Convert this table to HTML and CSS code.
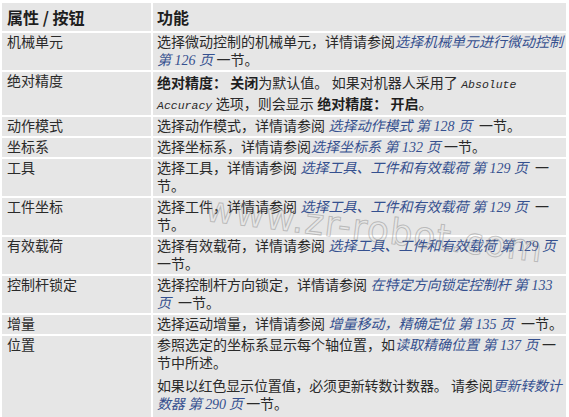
FILE: index.html
```html
<!DOCTYPE html>
<html lang="zh-CN">
<head>
<meta charset="utf-8">
<title>属性 / 按钮</title>
<link rel="stylesheet" href="styles.css">
</head>
<body>
<div class="page">
  <div class="grid">
    <div class="cell head">属性 / 按钮</div>
    <div class="cell head desc">功能</div>

    <div class="cell">机械单元</div>
    <div class="cell desc">选择微动控制的机械单元，详情请参阅<a class="ref">选择机械单元进行微动控制 第 126 页</a> 一节。</div>

    <div class="cell">绝对精度</div>
    <div class="cell desc"><b>绝对精度： 关闭</b>为默认值。 如果对机器人采用了 <span class="mono">Absolute Accuracy</span> 选项，则会显示 <b>绝对精度： 开启</b>。</div>

    <div class="cell">动作模式</div>
    <div class="cell desc">选择动作模式，详情请参阅 <a class="ref">选择动作模式 第 128 页</a>&nbsp; 一节。</div>

    <div class="cell">坐标系</div>
    <div class="cell desc">选择坐标系，详情请参阅<a class="ref">选择坐标系 第 132 页</a> 一节。</div>

    <div class="cell">工具</div>
    <div class="cell desc">选择工具，详情请参阅 <a class="ref">选择工具、工件和有效载荷 第 129 页</a>&nbsp; 一节。</div>

    <div class="cell">工件坐标</div>
    <div class="cell desc">选择工件，详情请参阅 <a class="ref">选择工具、工件和有效载荷 第 129 页</a>&nbsp; 一节。</div>

    <div class="cell">有效载荷</div>
    <div class="cell desc">选择有效载荷，详情请参阅 <a class="ref">选择工具、工件和有效载荷 第 129 页</a> 一节。</div>

    <div class="cell">控制杆锁定</div>
    <div class="cell desc">选择控制杆方向锁定，详情请参阅 <a class="ref">在特定方向锁定控制杆 第 133 页</a>&nbsp; 一节。</div>

    <div class="cell">增量</div>
    <div class="cell desc">选择运动增量，详情请参阅 <a class="ref">增量移动，精确定位 第 135 页</a>&nbsp; 一节。</div>

    <div class="cell">位置</div>
    <div class="cell desc">
      <p>参照选定的坐标系显示每个轴位置，如<a class="ref">读取精确位置 第 137 页</a> 一节中所述。</p>
      <p class="tight">如果以红色显示位置值，必须更新转数计数器。 请参阅<a class="ref">更新转数计数器 第 290 页</a> 一节。</p>
    </div>
  </div>
  <div class="watermark">www.zr-robot.com</div>
</div>
</body>
</html>
```

FILE: styles.css
```css
html, body {
  margin: 0;
  padding: 0;
  background: #ffffff;
}

.page {
  position: relative;
  width: 569px;
  height: 417px;
  overflow: hidden;
}

.grid {
  display: grid;
  grid-template-columns: 149px 413px;
  gap: 2px;
  padding: 3px 0 0 2px;
  font-family: "Liberation Serif", "Noto Sans CJK SC", serif;
  font-size: 14px;
  line-height: 18px;
  color: #2a2a2a;
}

.cell {
  background: #e6e6e6;
  padding: 1px 4px 0 5px;
  min-height: 18px;
}

.cell.desc {
  padding-left: 4px;
  padding-right: 2px;
}

.head {
  font-family: "Noto Sans CJK SC", sans-serif;
  font-weight: 700;
  font-size: 16px;
  line-height: 28px;
  padding-top: 0;
  color: #1e1e1e;
}

.ref {
  color: #35508f;
  font-style: italic;
  font-size: 14px;
}

b {
  font-family: "Noto Sans CJK SC", sans-serif;
  font-weight: 700;
  color: #1e1e1e;
}

.mono {
  font-family: "Liberation Mono", monospace;
  font-style: italic;
  font-size: 11.5px;
}

p {
  margin: 0 0 5px 0;
}

.tight {
  letter-spacing: -0.16px;
}

.watermark {
  position: absolute;
  left: 208px;
  top: 188px;
  font-family: "DejaVu Sans", sans-serif;
  font-size: 36px;
  letter-spacing: 1px;
  color: transparent;
  -webkit-text-stroke: 1px rgba(130, 130, 130, 0.45);
  transform: rotate(7deg);
  transform-origin: left top;
  pointer-events: none;
  white-space: nowrap;
}
```
